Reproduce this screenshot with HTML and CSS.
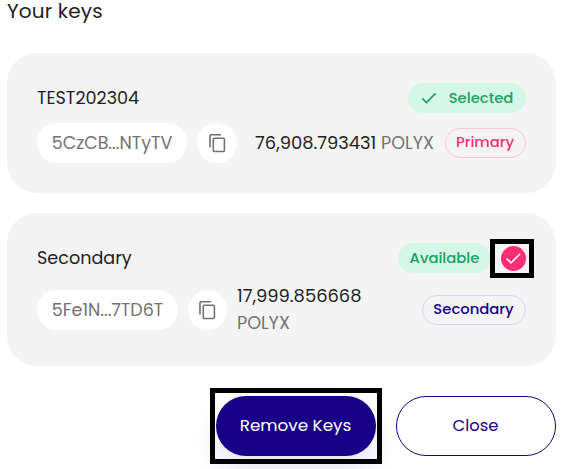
FILE: index.html
```html
<!DOCTYPE html>
<html lang="en">
<head>
    <meta charset="UTF-8" />
    <meta name="viewport" content="width=device-width, initial-scale=1" />
    <title>Your keys</title>
    <link rel="stylesheet" href="styles.css">
</head>
<body>
    <h1>Your keys</h1>
    <section class="card">
        <div class="row">
            <h2>TEST202304</h2>
            <span class="badge green selected">
                <svg width="16" height="12" viewBox="0 0 16 12"><path d="M1.3 6.4 5.4 10.5 14.6 1.3" fill="none" stroke="currentColor" stroke-width="1.7"/></svg>
                <span>Selected</span>
            </span>
        </div>
        <div class="row details">
            <span class="address first">5CzCB...NTyTV</span>
            <button class="copy" aria-label="Copy address">
                <svg width="18" height="20" viewBox="0 0 18 20" fill="none" stroke="currentColor" stroke-width="1.6"><path d="M2 14.6V2.8Q2 1.8 3 1.8H13"/><rect x="5.3" y="5.3" width="11.1" height="13.2" rx="1"/></svg>
            </button>
            <p class="balance single">76,908.793431 <span class="unit">POLYX</span></p>
            <span class="badge outline pink">Primary</span>
        </div>
    </section>
    <section class="card">
        <div class="row">
            <h2>Secondary</h2>
            <div class="status">
                <span class="badge green available">Available</span>
                <span class="check">
                    <svg width="25" height="25" viewBox="0 0 25 25"><path d="M5.5 12.4 10 16.9 19.2 7.8" fill="none" stroke="#fff" stroke-width="1.5"/></svg>
                    <span class="mark"></span>
                </span>
            </div>
        </div>
        <div class="row details">
            <span class="address second">5Fe1N...7TD6T</span>
            <button class="copy narrow" aria-label="Copy address">
                <svg width="18" height="20" viewBox="0 0 18 20" fill="none" stroke="currentColor" stroke-width="1.6"><path d="M2 14.6V2.8Q2 1.8 3 1.8H13"/><rect x="5.3" y="5.3" width="11.1" height="13.2" rx="1"/></svg>
            </button>
            <p class="balance stacked"><span>17,999.856668</span><span class="unit">POLYX</span></p>
            <span class="badge outline navy">Secondary</span>
        </div>
    </section>
    <footer>
        <button class="btn remove">Remove Keys<span class="mark"></span></button>
        <button class="btn close">Close</button>
    </footer>
</body>
</html>
```
FILE: styles.css
```css
* { box-sizing: border-box; }
body { margin: 0; padding: 0 7px; height: 469px; overflow: hidden; background: #fff; color: #1e1e1e; font-family: Poppins, Inter, sans-serif; font-size: 17.9px; }
h1, h2, p { margin: 0; font-weight: 400; white-space: nowrap; }
h1 { height: 53px; font-size: 20px; line-height: 22px; letter-spacing: .15px; }
h2 { font-size: 17.6px; line-height: 30px; }
button { padding: 0; border: 0; font: inherit; }
svg { display: block; flex: none; }

.card { background: #f4f4f4; border-radius: 30px; padding: 30px; margin-bottom: 20px; }
.row { display: flex; align-items: center; justify-content: space-between; }
.details { justify-content: flex-start; margin-top: 10px; }

.badge { display: flex; align-items: center; justify-content: center; height: 30px; border-radius: 15px; font-size: 14.8px; font-weight: 500; white-space: nowrap; }
.green { background: #d4f7e7; color: #15a262; padding-bottom: 1px; }
.selected { width: 118px; gap: 12px; }
.available { width: 93px; }
.outline { border: 1px solid; margin-left: auto; padding: 0 1px 2px 0; }
.pink { width: 81px; border-color: #fac7d8; color: #ff2e72; }
.navy { width: 104px; border-color: #dcd3ff; color: #170087; }

.status { display: flex; align-items: center; gap: 10px; }
.check { position: relative; width: 25px; height: 25px; border-radius: 50%; background: #ff2e72; }
.mark { position: absolute; border: 5px solid #000; }
.check .mark { inset: -7px -8px -7px -11px; }

.address { display: flex; align-items: center; justify-content: center; height: 40px; border-radius: 20px; background: #fff; color: #727272; font-size: 17.5px; white-space: nowrap; }
.first { width: 150px; }
.second { width: 141px; }
.copy { display: flex; align-items: center; justify-content: center; width: 40px; height: 40px; margin-left: 10px; padding-right: 1px; border-radius: 50%; background: #fff; color: #727272; }
.narrow { width: 39px; }
.balance { line-height: 27px; }
.single { margin-left: 18px; }
.stacked { margin: -1px 0 0 10px; }
.stacked span { display: block; }
.unit { color: #727272; font-size: 17.6px; }
.stacked .unit { padding-top: 1px; margin-bottom: -1px; }

footer { display: flex; justify-content: flex-end; gap: 20px; padding-top: 10px; }
.btn { position: relative; width: 160px; height: 60px; padding: 0 1px 2px 0; border-radius: 30px; font-size: 16.8px; }
.remove { background: #170087; color: #fff; box-shadow: 0 15px 30px rgba(23, 0, 135, .11); }
.remove .mark { inset: -8px -6px; }
.close { background: #fff; border: 1px solid #170087; color: #170087; font-size: 16.4px; }
```
